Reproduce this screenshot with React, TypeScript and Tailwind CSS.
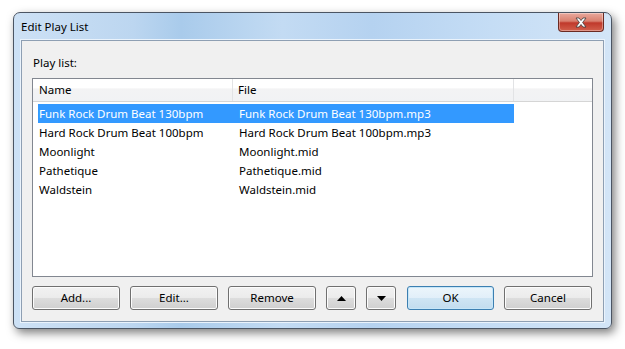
import React from "react";

const rows = [
  { name: "Funk Rock Drum Beat 130bpm", file: "Funk Rock Drum Beat 130bpm.mp3" },
  { name: "Hard Rock Drum Beat 100bpm", file: "Hard Rock Drum Beat 100bpm.mp3" },
  { name: "Moonlight", file: "Moonlight.mid" },
  { name: "Pathetique", file: "Pathetique.mid" },
  { name: "Waldstein", file: "Waldstein.mid" },
];

function Btn({
  children,
  className = "",
  primary,
}: {
  children: React.ReactNode;
  className?: string;
  primary?: boolean;
}) {
  return (
    <button
      className={
        "h-[24px] rounded-[3px] border flex items-center justify-center text-[11.5px] text-black " +
        (primary
          ? "border-[#3c7fb1] shadow-[inset_0_0_0_1px_#c6e6f8] bg-[linear-gradient(180deg,#ecf5fb_0%,#e1eff9_50%,#cfe5f4_50%,#c2dcee_100%)] "
          : "border-[#707070] shadow-[inset_0_0_0_1px_#fcfcfc] bg-[linear-gradient(180deg,#f2f2f2_0%,#ebebeb_50%,#dddddd_50%,#cfcfcf_100%)] ") +
        className
      }
    >
      {children}
    </button>
  );
}

export default function App() {
  return (
    <div
      className="w-[625px] h-[349px] bg-white pl-[13px] pt-[12px]"
      style={{ fontFamily: "'Segoe UI', 'Noto Sans', sans-serif" }}
    >
      <div className="w-[599px] h-[317px] rounded-t-[7px] rounded-b-[6px] border border-[#4b5563] shadow-[3px_4px_10px_rgba(0,0,0,0.5)] bg-[linear-gradient(90deg,#cde1f5_0%,#bcd6f0_20%,#a9cbeb_28%,#c3dbf3_45%,#b5d2f0_60%,#c5ddf5_80%,#d3e5f7_100%)] flex flex-col px-[7px] pb-[6px]">
        <div className="h-[27px] flex items-start justify-between shrink-0">
          <div className="pt-[6px] text-[11.5px] leading-[15px] text-black">Edit Play List</div>
          <div className="w-[46px] h-[19px] rounded-b-[4px] border border-t-0 border-[#6b2a22] bg-[linear-gradient(180deg,#e9a99d_0%,#d9806f_45%,#c0392b_55%,#d2604c_100%)] shadow-[inset_0_0_0_1px_rgba(255,255,255,0.35)] flex items-center justify-center">
            <svg width="14" height="11" viewBox="0 0 14 11">
              <path
                d="M2 1 L5 1 L7 3.5 L9 1 L12 1 L8.6 5.5 L12 10 L9 10 L7 7.5 L5 10 L2 10 L5.4 5.5 Z"
                fill="#ffffff"
                stroke="#3a3a3a"
                strokeWidth="0.8"
              />
            </svg>
          </div>
        </div>
        <div className="flex-1 border border-[#8e9fb3] bg-[#f0f0f0] flex flex-col px-[10px] pt-[14px] pb-[11px] shadow-[0_0_0_1px_#eaf3fc]">
          <div className="text-[11.5px] leading-[15px] text-black pl-[1px]">Play list:</div>
          <div className="mt-[8px] h-[199px] border border-[#828790] bg-white flex flex-col">
            <div className="h-[23px] flex border-b border-[#d5d5d5] bg-[linear-gradient(180deg,#ffffff_0%,#ffffff_40%,#f3f3f4_45%,#f1f2f4_100%)] text-[11.5px] text-black">
              <div className="w-[200px] border-r border-[#e2e3e5] flex items-center pl-[6px]">Name</div>
              <div className="w-[281px] border-r border-[#e2e3e5] flex items-center pl-[5px]">File</div>
              <div className="flex-1" />
            </div>
            <div className="pt-[2px] pl-[5px]">
              {rows.map((r, i) => (
                <div
                  key={r.name}
                  className={
                    "w-[476px] h-[19px] flex items-center text-[11.5px] " +
                    (i === 0 ? "bg-[#3399ff] text-white" : "text-black")
                  }
                >
                  <div className="w-[195px] pl-[1px] whitespace-nowrap">{r.name}</div>
                  <div className="pl-[6px] whitespace-nowrap">{r.file}</div>
                </div>
              ))}
            </div>
          </div>
          <div className="mt-[9px] flex">
            <Btn className="w-[88px]">Add...</Btn>
            <Btn className="w-[88px] ml-[10px]">Edit...</Btn>
            <Btn className="w-[88px] ml-[10px]">Remove</Btn>
            <Btn className="w-[30px] ml-[10px]">
              <svg width="9" height="5" viewBox="0 0 9 5">
                <path d="M0 5 L4.5 0 L9 5 Z" fill="#000" />
              </svg>
            </Btn>
            <Btn className="w-[30px] ml-[10px]">
              <svg width="9" height="5" viewBox="0 0 9 5">
                <path d="M0 0 L9 0 L4.5 5 Z" fill="#000" />
              </svg>
            </Btn>
            <Btn primary className="w-[87px] ml-[11px]">
              OK
            </Btn>
            <Btn className="w-[88px] ml-[10px]">Cancel</Btn>
          </div>
        </div>
      </div>
    </div>
  );
}
